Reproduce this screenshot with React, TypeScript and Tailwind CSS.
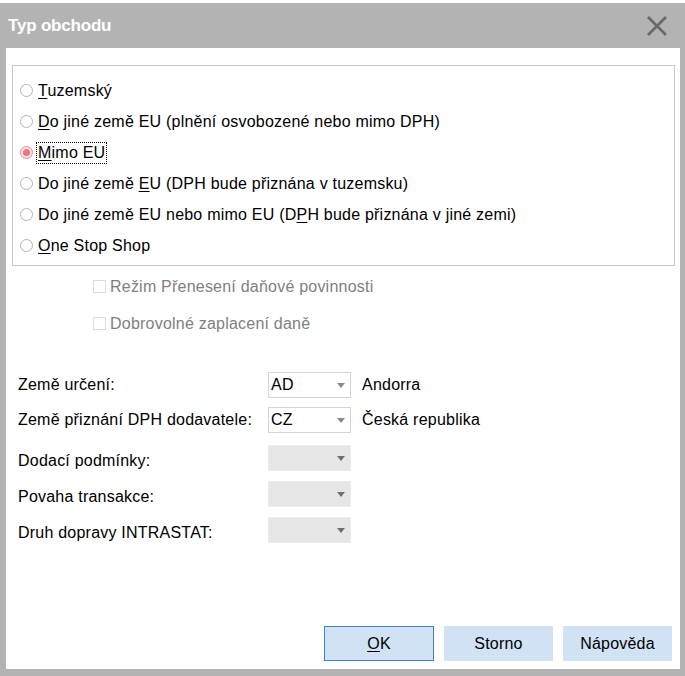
const font = "font-['Liberation_Sans',Arial,sans-serif]";

type Choice = { pre: string; key: string; post: string; checked?: boolean };

const choices: Choice[] = [
  { pre: '', key: 'T', post: 'uzemský' },
  { pre: '', key: 'D', post: 'o jiné země EU (plnění osvobozené nebo mimo DPH)' },
  { pre: '', key: 'M', post: 'imo EU', checked: true },
  { pre: 'Do jiné země ', key: 'E', post: 'U (DPH bude přiznána v tuzemsku)' },
  { pre: 'Do jiné země EU nebo mimo EU (D', key: 'P', post: 'H bude přiznána v jiné zemi)' },
  { pre: '', key: 'O', post: 'ne Stop Shop' },
];

function Radio({ checked }: { checked?: boolean }) {
  if (checked) {
    return (
      <span className="w-[13px] h-[13px] rounded-full border border-[#f08898] bg-[#fde4e8] flex items-center justify-center shrink-0">
        <span className="w-[7px] h-[7px] rounded-full bg-[#f07488]" />
      </span>
    );
  }
  return <span className="w-[13px] h-[13px] rounded-full border border-[#b4b4b4] bg-white shrink-0" />;
}

function Arrow({ color }: { color: string }) {
  return (
    <svg width="8" height="5" viewBox="0 0 8 5" className="shrink-0">
      <path d="M0 0h8L4 5z" fill={color} />
    </svg>
  );
}

function Select({ value }: { value?: string }) {
  if (value === undefined) {
    return (
      <div className="w-[83px] h-[26px] bg-[#e6e6e6] border border-[#ececec] flex items-center justify-end pr-[5px]">
        <Arrow color="#6f6f6f" />
      </div>
    );
  }
  return (
    <div className="w-[83px] h-[26px] bg-white border border-[#d4d4d4] flex items-center justify-between pl-[2px] pr-[5px]">
      <span className="text-[16px] text-black">{value}</span>
      <Arrow color="#8a8a8a" />
    </div>
  );
}

const fields = [
  { label: 'Země určení:', value: 'AD', name: 'Andorra', mt: 'mt-[30px]' },
  { label: 'Země přiznání DPH dodavatele:', value: 'CZ', name: 'Česká republika', mt: 'mt-[9px]' },
  { label: 'Dodací podmínky:', mt: 'mt-[12px]' },
  { label: 'Povaha transakce:', mt: 'mt-[10px]' },
  { label: 'Druh dopravy INTRASTAT:', mt: 'mt-[10px]' },
];

export default function App() {
  return (
    <div className={`w-[685px] h-[676px] bg-white pt-[3px] ${font}`}>
      <div className="h-[673px] bg-[#b3b3b3] flex flex-col pl-[6px] pr-[5px] pb-[7px]">
        {/* title bar */}
        <div className="h-[45px] shrink-0 flex items-center justify-between -ml-[6px] pl-[8px] pr-[12px]">
          <span className="text-white font-bold text-[17px] tracking-[-0.2px]">Typ obchodu</span>
          <svg width="22" height="22" viewBox="0 0 22 22">
            <path d="M2 2L20 20M20 2L2 20" stroke="#6a6a6a" strokeWidth="2.8" />
          </svg>
        </div>

        <div className="flex-1 bg-white flex flex-col pl-[6px] pr-[5px] pb-[8px] text-[16px] text-black tracking-[0.22px]">
          {/* trade type choices */}
          <div className="mt-[17px] border border-[#c8c8c8] pt-[9px] pb-[4px] px-[7px] flex flex-col">
            {choices.map((c, i) => (
              <div key={i} className="h-[31px] flex items-center gap-[4px]">
                <Radio checked={c.checked} />
                <span
                  className={`leading-[20px] px-[1px] ${
                    c.checked ? 'outline outline-1 outline-dotted outline-black' : 'outline outline-1 outline-transparent'
                  }`}
                >
                  {c.pre}
                  <span className="underline underline-offset-2">{c.key}</span>
                  {c.post}
                </span>
              </div>
            ))}
          </div>

          {/* disabled options */}
          <div className="pl-[81px] mt-[2px] flex flex-col text-[#808080]">
            {['Režim Přenesení daňové povinnosti', 'Dobrovolné zaplacení daně'].map((t) => (
              <div key={t} className="h-[37px] flex items-center gap-[4px]">
                <span className="w-[13px] h-[13px] border border-[#dcdcdc] bg-white shrink-0" />
                <span>{t}</span>
              </div>
            ))}
          </div>

          {/* country & intrastat fields */}
          <div className="pl-[6px] flex flex-col">
            {fields.map((f) => (
              <div key={f.label} className={`h-[26px] flex items-center ${f.mt}`}>
                <span className={`w-[250px] shrink-0 ${f.value ? '' : 'mt-[6px]'}`}>{f.label}</span>
                <Select value={f.value} />
                {f.name && <span className="ml-[11px]">{f.name}</span>}
              </div>
            ))}
          </div>

          <div className="flex-1" />

          <div className="flex justify-end gap-[10px] pr-[3px]">
            <button className="w-[110px] h-[35px] bg-[#d1e2f4] border border-[#3d7fd0] text-[16px]">
              <span className="underline underline-offset-2">O</span>K
            </button>
            <button className="w-[109px] h-[35px] bg-[#d1e2f4] text-[16px]">Storno</button>
            <button className="w-[109px] h-[35px] bg-[#d1e2f4] text-[16px]">Nápověda</button>
          </div>
        </div>
      </div>
    </div>
  );
}
